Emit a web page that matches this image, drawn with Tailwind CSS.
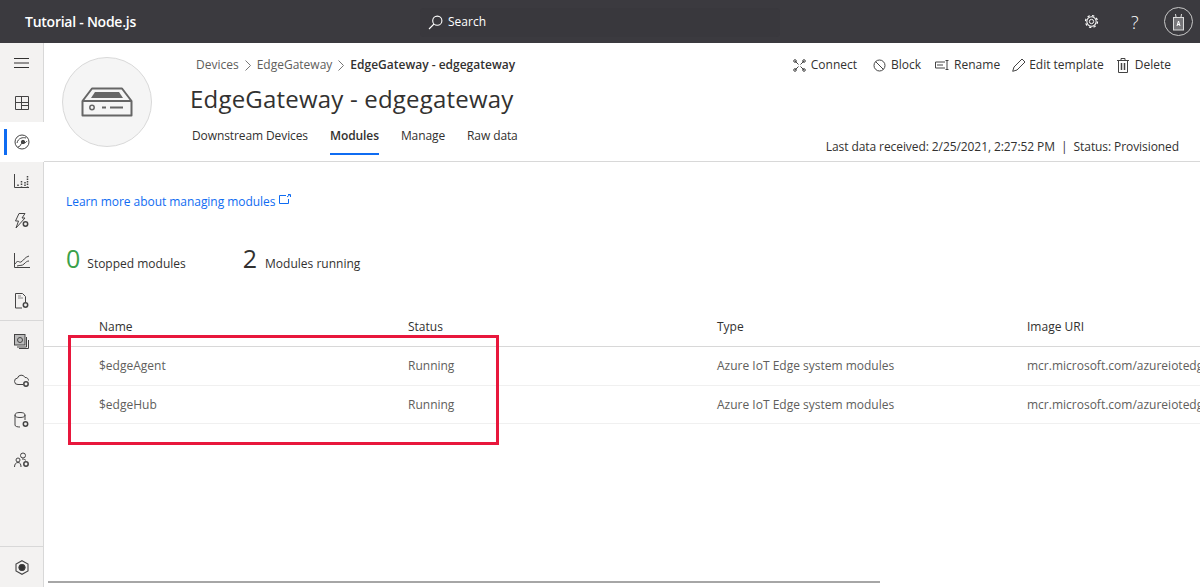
<!DOCTYPE html>
<html lang="en">
<head>
    <meta charset="UTF-8">
    <title>Tutorial - Node.js</title>
    <script src="https://cdn.jsdelivr.net/npm/@tailwindcss/browser@4"></script>
</head>
<body class="h-[587px] w-[1200px] overflow-hidden bg-white font-['Open_Sans',sans-serif] text-[12px] text-[#323130] relative">

<!-- top bar -->
<header class="h-[43px] bg-[#3b3a3f] text-white flex items-center relative">
    <div class="ml-[25px] w-[393px] text-[14px] font-semibold tracking-[-0.25px]">Tutorial - Node.js</div>
    <div class="w-[360px] h-[29px] ml-[2px] mt-[1px] rounded-sm bg-[#39383d] flex items-center pl-[8px] gap-[5px] text-[12px]">
        <svg class="w-[15px] h-[15px]" viewBox="0 0 15 15" fill="none" stroke="#fff" stroke-width="1.1"><circle cx="9.3" cy="5.7" r="4.6"/><path d="M6 9 1 14"/></svg>
        <span>Search</span>
    </div>
    <div class="ml-auto flex items-center">
        <svg class="w-[15px] h-[15px]" viewBox="0 0 16 16" fill="none" stroke="#fff"><circle cx="8" cy="8" r="2.3"/><circle cx="8" cy="8" r="5" stroke-width="1.1"/><circle cx="8" cy="8" r="6.4" stroke-width="1.3" stroke-dasharray="2.5 2.5"/></svg>
        <span class="ml-[32px] w-[8px] text-[18px] font-light leading-none">?</span>
        <div class="ml-[25px] mr-[7px] w-[29px] h-[29px] rounded-full border border-[#c8c8c8] flex items-center justify-center">
            <svg class="w-[13px] h-[18px]" viewBox="0 0 13 18" fill="none" stroke="#ddd"><rect x="1.5" y="4.5" width="10" height="12.5" fill="#77767a"/><path d="M4 4 3.5 1M9 4l.5-3"/><path d="M5 13l1.5-5L8 13M5.500 11.500h2" stroke="#fff"/></svg>
        </div>
    </div>
</header>

<div class="flex h-[544px]">
    <!-- left nav -->
    <nav class="w-[44px] shrink-0 bg-[#f3f2f1] border-r border-[#d8d8d8] flex flex-col text-[#3b3a39]">
        <div class="h-[40px] flex items-center justify-center">
            <svg class="w-[15px] h-[12px]" viewBox="0 0 15 12" stroke="#323130"><path d="M0 1.500h15M0 6h15M0 10.500h15"/></svg>
        </div>
        <div class="h-[39px] flex items-center justify-center">
            <svg class="w-[14px] h-[14px]" viewBox="0 0 14 14" fill="none" stroke="#444"><path d="M.5.500h13v13H.5zM.5 6.500h13M6.500.500v13M6.500 9.500h7"/></svg>
        </div>
        <div class="h-[40px] bg-white -mr-px relative flex items-center justify-center">
            <div class="absolute left-[4px] top-[7px] w-[3px] h-[26px] bg-[#0f6cf2]"></div>
            <svg class="w-[16px] h-[16px]" viewBox="0 0 16 16" fill="none" stroke="#444"><circle cx="8" cy="8" r="7"/><path d="M3 9c1-5 6-6 9-5M4 13c3 0 2-4 5-4s3-1 4-2"/><circle cx="9" cy="8" r="1.700" fill="#444"/></svg>
        </div>
        <div class="h-[39px] flex items-center justify-center">
            <svg class="w-[15px] h-[14px] -mt-[2px]" viewBox="0 0 15 14" fill="none" stroke="#444"><path d="M.5 0v13.500H15"/><path d="M4 10.500v2M7.500 7v5.500M11 8v4.500M13.500 2v10.500" stroke-width="1.500" stroke-dasharray="1.500 1"/></svg>
        </div>
        <div class="h-[40px] flex items-center justify-center">
            <svg class="w-[15px] h-[16px]" viewBox="0 0 15 16" fill="none" stroke="#444"><path d="M5 .500h6L8 5h3L2 15l2.500-7H1.500z"/><circle cx="11.500" cy="11" r="2.200" fill="#f3f2f1" stroke-width="1.500"/></svg>
        </div>
        <div class="h-[40px] flex items-center justify-center">
            <svg class="w-[16px] h-[15px] -mt-[2px]" viewBox="0 0 16 15" fill="none" stroke="#444"><path d="M.5 0v14.500H16"/><path d="M1 11c3-5 4-1 6-2s4-5 8-6M3 13c3-1 5 0 7-2s3-3 5-3" /></svg>
        </div>
        <div class="h-[40px] flex items-center justify-center border-b border-[#d8d8d8]">
            <svg class="w-[15px] h-[16px]" viewBox="0 0 15 16" fill="none" stroke="#444"><path d="M8 15H1.500V.500h7l3 3V9"/><path d="M4 3h3M4 5h5" stroke="#888"/><circle cx="11.500" cy="12" r="2.200" stroke-width="1.500"/></svg>
        </div>
        <div class="h-[40px] flex items-center justify-center">
            <svg class="w-[15px] h-[15px]" viewBox="0 0 15 15" fill="none" stroke="#444"><rect x=".5" y=".5" width="10.500" height="10.500" fill="#bbb"/><path d="M3 13h9.500V3M5 14.500h9.500V6"/><circle cx="6" cy="6" r="2.500"/></svg>
        </div>
        <div class="h-[39px] flex items-center justify-center">
            <svg class="w-[16px] h-[13px]" viewBox="0 0 16 13" fill="none" stroke="#444"><path d="M9 10.500H4a3.200 3.200 0 0 1-.5-6.400A4 4 0 0 1 11 3.500a3 3 0 0 1 3.500 3"/><circle cx="12" cy="10" r="2.200" stroke-width="1.500"/></svg>
        </div>
        <div class="h-[40px] flex items-center justify-center">
            <svg class="w-[15px] h-[16px]" viewBox="0 0 15 16" fill="none" stroke="#444"><ellipse cx="6" cy="3" rx="5" ry="2.500"/><path d="M1 3v10c0 1.500 2.500 2 5 2M11 3v5"/><circle cx="11.500" cy="12" r="2.200" stroke-width="1.500"/></svg>
        </div>
        <div class="h-[40px] flex items-center justify-center">
            <svg class="w-[16px] h-[16px]" viewBox="0 0 16 16" fill="none" stroke="#444"><circle cx="9" cy="3.500" r="2.500"/><circle cx="4" cy="8" r="2"/><path d="M.5 15c0-3 1.500-4.500 3.500-4.500S7 12 7 15M8 7c2 0 3 .5 4 1.500"/><circle cx="12" cy="12" r="2.200" stroke-width="1.500"/></svg>
        </div>
        <div class="mt-auto h-[41px] border-t border-[#d8d8d8] flex items-center justify-center">
            <svg class="w-[14px] h-[15px]" viewBox="0 0 14 15" fill="none" stroke="#444"><path d="M7 .700 13 4v7l-6 3.300L1 11V4z" stroke-width="1.100"/><circle cx="7" cy="7.500" r="3.200" fill="#333"/></svg>
        </div>
    </nav>

    <main class="flex-1 min-w-0">
        <!-- device header -->
        <section class="h-[119px] border-b border-[#d8d8d8] flex pl-[18px] relative">
            <div class="mt-[14px] w-[90px] h-[90px] rounded-full bg-[#f5f5f5] border border-[#d9d9d9] flex items-center justify-center shrink-0">
                <svg class="w-[52px] h-[30px]" viewBox="0 0 52 30" fill="none" stroke="#666" stroke-width="2"><path d="M1.500 14 11 1.500h30L50.500 14v14.500h-49z" stroke-linejoin="round"/><path d="M1.500 14h49"/><path d="M10 11l4-6h24l4 6z" fill="#666" stroke="none"/><circle cx="11" cy="20.500" r="2.200" stroke-width="1.500"/><path d="M21 20.500h4M29 20.500h13"/></svg>
            </div>
            <div class="ml-[38px] shrink-0">
                <div class="mt-[14px] ml-[6px] h-[16px] flex items-center gap-[5px] whitespace-nowrap text-[#605e5c]">
                    <span>Devices</span>
                    <svg class="w-[8px] h-[11px]" viewBox="0 0 8 11" fill="none" stroke="#777"><path d="m1.500 .5 5 5-5 5"/></svg>
                    <span>EdgeGateway</span>
                    <svg class="w-[8px] h-[11px]" viewBox="0 0 8 11" fill="none" stroke="#777"><path d="m1.500 .5 5 5-5 5"/></svg>
                    <span class="font-semibold text-[#323130]">EdgeGateway - edgegateway</span>
                </div>
                <h1 class="mt-[10px] h-[32px] leading-[32px] text-[24px] tracking-[0.2px] whitespace-nowrap">EdgeGateway - edgegateway</h1>
                <div class="mt-[3px] ml-[2px] flex gap-[22px] whitespace-nowrap tracking-[-0.1px]">
                    <span class="h-[37px] pt-[9px]">Downstream Devices</span>
                    <span class="h-[37px] pt-[9px] font-semibold border-b-2 border-[#0f6cf2]">Modules</span>
                    <span class="h-[37px] pt-[9px]">Manage</span>
                    <span class="h-[37px] pt-[9px]">Raw data</span>
                </div>
            </div>
            <div class="ml-auto pr-[29px] flex flex-col items-end">
                <div class="mt-[14px] h-[16px] flex items-center whitespace-nowrap">
                    <svg class="w-[13px] h-[13px] mr-[5px]" viewBox="0 0 13 13" fill="none" stroke="#444"><path d="m2 2 3.500 3.500M11 2 7.500 5.500M2 11l3.500-3.500M11 11 7.500 7.500"/><circle cx="2" cy="2" r="1.300"/><circle cx="11" cy="2" r="1.300"/><circle cx="2" cy="11" r="1.300"/><circle cx="11" cy="11" r="1.300"/></svg>
                    <span>Connect</span>
                    <svg class="ml-[16px] mr-[5px] w-[13px] h-[13px]" viewBox="0 0 13 13" fill="none" stroke="#444"><circle cx="6.500" cy="6.500" r="5.500"/><path d="m2.500 2.500 8 8"/></svg>
                    <span>Block</span>
                    <svg class="ml-[14px] mr-[4px] w-[15px] h-[10px]" viewBox="0 0 15 10" fill="none" stroke="#444"><path d="M10 2H.5v6H10M12 .5v9M10.500.5h3M10.500 9.500h3M2 5h6"/></svg>
                    <span>Rename</span>
                    <svg class="ml-[12px] mr-[3px] w-[14px] h-[14px]" viewBox="0 0 14 14" fill="none" stroke="#444"><path d="M.7 13.300 2 9l8-8 3 3-8 8z"/></svg>
                    <span>Edit template</span>
                    <svg class="ml-[13px] mr-[6px] w-[12px] h-[15px]" viewBox="0 0 12 15" fill="none" stroke="#444"><path d="M0 2.500h12M4 2.500V.500h4v2M1.500 2.500v12h9v-12"/><path d="M4.500 5v7M7.500 5v7" stroke-width="1.500"/></svg>
                    <span>Delete</span>
                </div>
                <div class="mt-[65px] whitespace-nowrap tracking-[-0.08px] -mr-[8px]">Last data received: 2/25/2021, 2:27:52 PM &nbsp;|&nbsp; Status: Provisioned</div>
            </div>
        </section>

        <!-- link + counters -->
        <div class="pl-[22px] pt-[31px] h-[79px] flex items-start gap-[4px] text-[#0f6cf2] tracking-[-0.05px]">
            <a>Learn more about managing modules</a>
            <svg class="w-[12px] h-[10px] mt-[1px]" viewBox="0 0 12 10" fill="none" stroke="#0f6cf2"><path d="M7 1.500H.5v8h9V5M8 3l3-2.500M9 .5h2.500V3"/></svg>
        </div>
        <div class="pl-[22px] h-[38px] flex items-center">
            <span class="text-[25px] text-[#3aa14a] leading-none -mt-[3px]">0</span>
            <span class="ml-[7px] mt-[7px]">Stopped modules</span>
            <span class="ml-[57px] text-[25px] leading-none -mt-[3px]">2</span>
            <span class="ml-[8px] mt-[7px]">Modules running</span>
        </div>

        <!-- table -->
        <div class="mt-[37px] whitespace-nowrap overflow-hidden">
            <div class="h-[31px] pl-[55px] grid grid-cols-[309px_309px_310px_1fr] font-medium border-b border-[#d8d8d8] items-start pt-[2px]">
                <span>Name</span><span>Status</span><span>Type</span><span>Image URI</span>
            </div>
            <div class="h-[39px] pl-[55px] grid grid-cols-[309px_309px_310px_1fr] items-center border-b border-[#f0f0f0] text-[#605e5c]">
                <span>$edgeAgent</span><span>Running</span><span>Azure IoT Edge system modules</span><span>mcr.microsoft.com/azureiotedge-agent:1.0</span>
            </div>
            <div class="h-[38px] pl-[55px] grid grid-cols-[309px_309px_310px_1fr] items-center border-b border-[#f0f0f0] text-[#605e5c]">
                <span>$edgeHub</span><span>Running</span><span>Azure IoT Edge system modules</span><span>mcr.microsoft.com/azureiotedge-hub:1.0</span>
            </div>
        </div>
    </main>
</div>

<!-- annotation box and scrollbar sit over the page -->
<div class="absolute left-[68px] top-[335px] w-[431px] h-[110px] border-[3px] border-[#e8173c]"></div>
<div class="absolute left-[48px] top-[581px] w-[832px] h-[2px] bg-[#a6a6a6]"></div>
</body>
</html>
